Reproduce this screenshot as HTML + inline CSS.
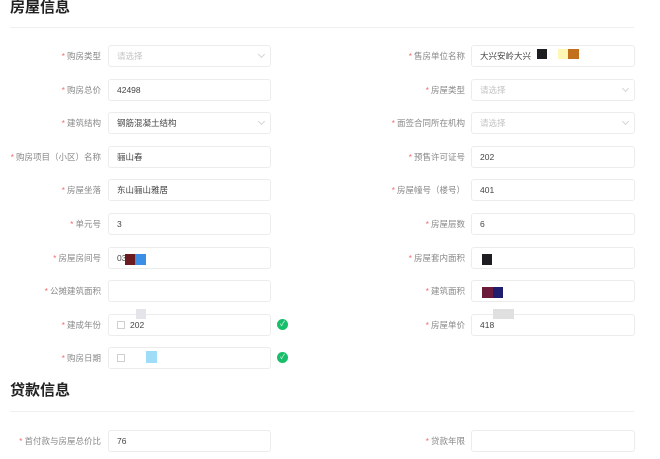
<!DOCTYPE html><html><head><meta charset="utf-8"><style>
body{margin:0;width:660px;height:459px;background:#fff;position:relative;overflow:hidden;font-family:"Liberation Sans","Noto Sans CJK SC",sans-serif}
.t{position:absolute;left:10px;font-size:15px;font-weight:bold;color:#222;line-height:16px}
.hr{position:absolute;left:10px;width:624px;height:1px;background:#f0f0f0}
.l{position:absolute;width:200px;text-align:right;font-size:8.5px;color:#888;line-height:22px}
.l b{color:#f56c6c;font-weight:normal;margin-right:2px}
.i{position:absolute;height:20px;border:1px solid #ececec;border-radius:3px;background:#fff;font-size:8.5px;color:#444;line-height:20px;padding-left:8px;box-sizing:content-box}
.L{left:108px;width:153px}.R{left:471px;width:154px}
.ph{color:#c4c4c4}
.ar{position:absolute;right:6px;top:6px;width:4px;height:4px;border-right:1px solid #d4d4d4;border-bottom:1px solid #d4d4d4;transform:rotate(45deg)}
.ok{position:absolute;left:277px;width:11px;height:11px;border-radius:50%;background:#19be6b;color:#fff;font-size:7px;line-height:11px;text-align:center}
.sq{position:absolute}
.cal{display:inline-block;width:6px;height:6px;border:1px solid #d0d0d0;margin-right:5px;vertical-align:-1px}
</style></head><body>
<div class="t" style="top:0">房屋信息</div>
<div class="hr" style="top:27px"></div>

<div class="l" style="left:-99px;top:45px"><b>*</b>购房类型</div><div class="i L ph" style="top:45px">请选择<span class="ar"></span></div>
<div class="l" style="left:-99px;top:79px"><b>*</b>购房总价</div><div class="i L" style="top:79px">42498</div>
<div class="l" style="left:-99px;top:112px"><b>*</b>建筑结构</div><div class="i L" style="top:112px">钢筋混凝土结构<span class="ar"></span></div>
<div class="l" style="left:-99px;top:146px"><b>*</b>购房项目（小区）名称</div><div class="i L" style="top:146px">骊山春</div>
<div class="l" style="left:-99px;top:179px"><b>*</b>房屋坐落</div><div class="i L" style="top:179px">东山骊山雅居</div>
<div class="l" style="left:-99px;top:213px"><b>*</b>单元号</div><div class="i L" style="top:213px">3</div>
<div class="l" style="left:-99px;top:247px"><b>*</b>房屋房间号</div><div class="i L" style="top:247px">03</div>
<div class="sq" style="left:125px;top:254px;width:10px;height:11px;background:#6b1a1f"></div><div class="sq" style="left:135px;top:254px;width:11px;height:11px;background:#3a8ee6"></div>
<div class="l" style="left:-99px;top:280px"><b>*</b>公摊建筑面积</div><div class="i L" style="top:280px"></div>
<div class="l" style="left:-99px;top:314px"><b>*</b>建成年份</div><div class="i L" style="top:314px"><span class="cal"></span>202</div><div class="ok" style="top:319px">✓</div>
<div class="sq" style="left:136px;top:309px;width:10px;height:10px;background:#e4e4ea"></div>
<div class="l" style="left:-99px;top:347px"><b>*</b>购房日期</div><div class="i L" style="top:347px"><span class="cal"></span></div><div class="ok" style="top:352px">✓</div>
<div class="sq" style="left:146px;top:351px;width:11px;height:12px;background:#9fdcf7"></div>

<div class="l" style="left:265px;top:45px"><b>*</b>售房单位名称</div><div class="i R" style="top:45px">大兴安岭大兴</div>
<div class="sq" style="left:537px;top:49px;width:10px;height:10px;background:#1e1e22"></div><div class="sq" style="left:558px;top:49px;width:10px;height:10px;background:#fff7b5"></div><div class="sq" style="left:568px;top:49px;width:11px;height:10px;background:#c2701c"></div>
<div class="l" style="left:265px;top:79px"><b>*</b>房屋类型</div><div class="i R ph" style="top:79px">请选择<span class="ar"></span></div>
<div class="l" style="left:265px;top:112px"><b>*</b>面签合同所在机构</div><div class="i R ph" style="top:112px">请选择<span class="ar"></span></div>
<div class="l" style="left:265px;top:146px"><b>*</b>预售许可证号</div><div class="i R" style="top:146px">202</div>
<div class="l" style="left:265px;top:179px"><b>*</b>房屋幢号（楼号）</div><div class="i R" style="top:179px">401</div>
<div class="l" style="left:265px;top:213px"><b>*</b>房屋层数</div><div class="i R" style="top:213px">6</div>
<div class="l" style="left:265px;top:247px"><b>*</b>房屋套内面积</div><div class="i R" style="top:247px"></div>
<div class="sq" style="left:482px;top:254px;width:10px;height:11px;background:#1e1e22"></div>
<div class="l" style="left:265px;top:280px"><b>*</b>建筑面积</div><div class="i R" style="top:280px"></div>
<div class="sq" style="left:482px;top:287px;width:11px;height:11px;background:#6b1a3a"></div><div class="sq" style="left:493px;top:287px;width:10px;height:11px;background:#1f1e6e"></div>
<div class="l" style="left:265px;top:314px"><b>*</b>房屋单价</div><div class="i R" style="top:314px">418</div>
<div class="sq" style="left:493px;top:309px;width:21px;height:10px;background:#e0e0e0"></div>

<div class="t" style="top:383px">贷款信息</div>
<div class="hr" style="top:411px"></div>
<div class="l" style="left:-99px;top:430px"><b>*</b>首付款与房屋总价比</div><div class="i L" style="top:430px">76</div>
<div class="l" style="left:265px;top:430px"><b>*</b>贷款年限</div><div class="i R" style="top:430px"></div>
</body></html>
